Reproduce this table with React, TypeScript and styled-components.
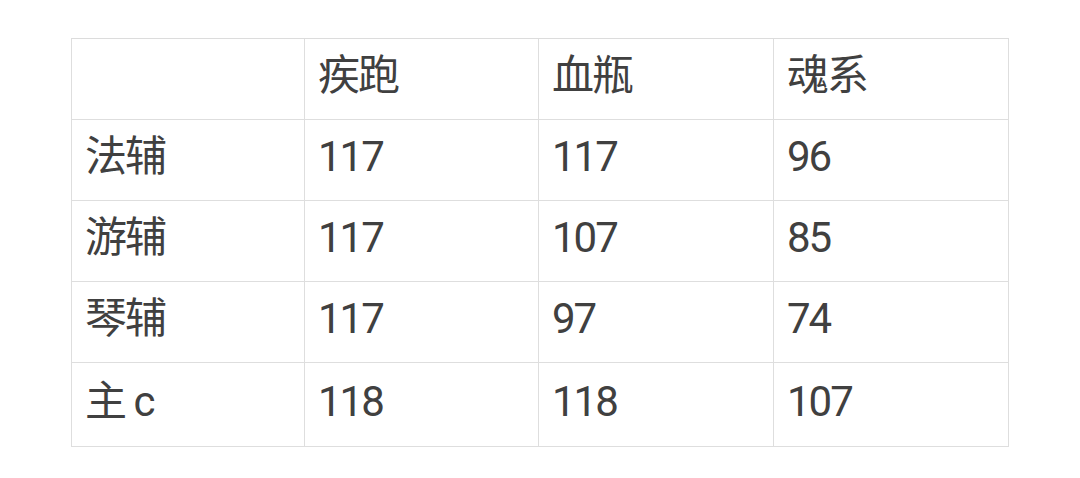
import React from "react";
import styled, { createGlobalStyle } from "styled-components";

const GlobalStyle = createGlobalStyle`
  html, body {
    margin: 0;
    padding: 0;
    background: #ffffff;
  }
  body {
    font-family: Roboto, "Noto Sans CJK SC", sans-serif;
  }
`;

const Page = styled.div`
  width: 1080px;
  height: 478px;
  padding: 38px 0 0 71px;
  box-sizing: border-box;
`;

const Grid = styled.div`
  display: grid;
  grid-template-columns: 233px 234px 235px 235px;
  grid-template-rows: repeat(4, 81px) 84px;
  width: max-content;
  border-top: 1px solid #dcdcdc;
  border-left: 1px solid #dedede;
  color: #404040;
  font-size: 42px;
  letter-spacing: -2px;
`;

const Cell = styled.div`
  display: flex;
  align-items: center;
  box-sizing: border-box;
  padding: 0 0 6px 13px;
  border-right: 1px solid #dedede;
  border-bottom: 1px solid #dedede;
  line-height: 1;
  white-space: nowrap;
`;

const head = ["", "疾跑", "血瓶", "魂系"];
const rows = [
  ["法辅", "117", "117", "96"],
  ["游辅", "117", "107", "85"],
  ["琴辅", "117", "97", "74"],
  ["主 c", "118", "118", "107"],
];

const App = () => {
  return (
    <React.Fragment>
      <GlobalStyle />
      <Page>
        <Grid>
          {[head, ...rows].map((r, i) =>
            r.map((c, j) => <Cell key={`${i}-${j}`}>{c}</Cell>)
          )}
        </Grid>
      </Page>
    </React.Fragment>
  );
};

export default App;
